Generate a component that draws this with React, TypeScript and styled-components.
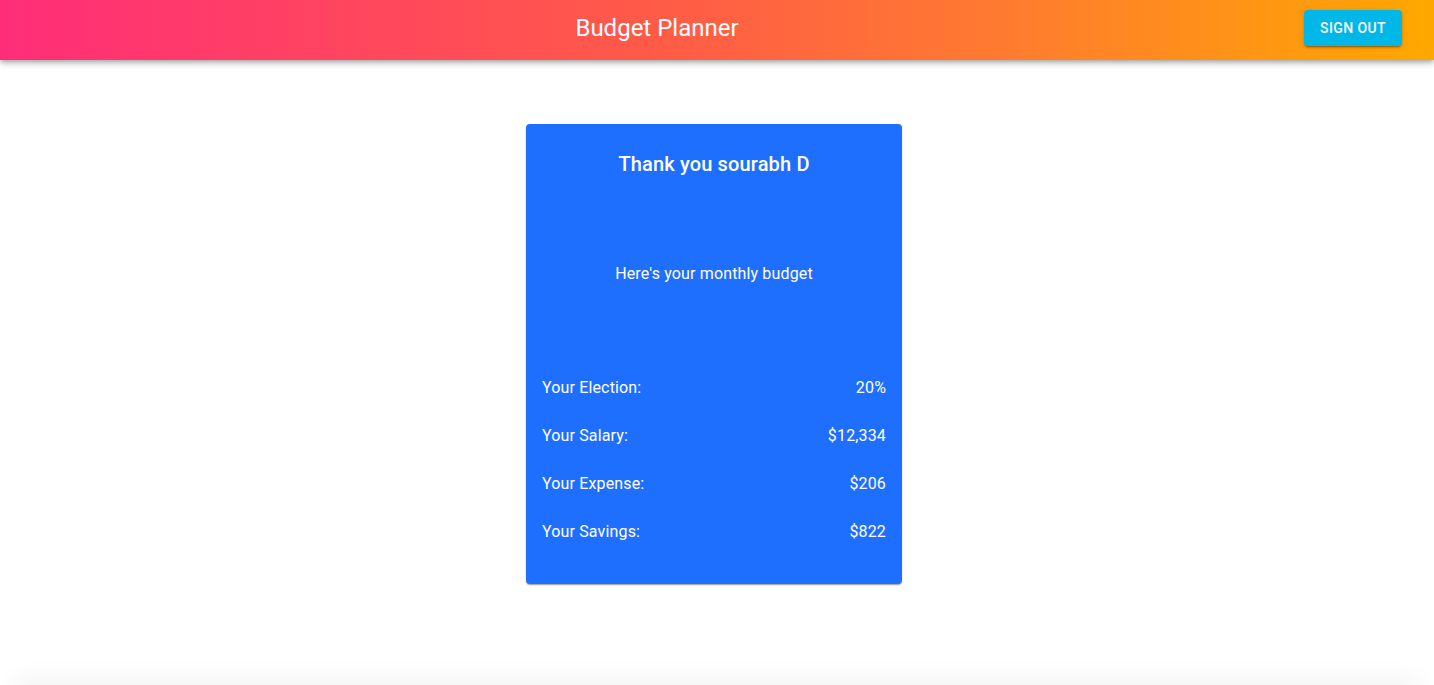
import React from "react";
import styled, { createGlobalStyle } from "styled-components";

const Global = createGlobalStyle`
  html, body { margin: 0; padding: 0; background: #fff; }
  body { font-family: Roboto, "Helvetica", Arial, sans-serif; -webkit-font-smoothing: antialiased; }
  * { box-sizing: border-box; }
`;

const Header = styled.header`
  height: 60px;
  display: flex;
  align-items: center;
  padding: 0 32px 0 24px;
  background: linear-gradient(90deg, #ff2d79 0%, #ff5a48 45%, #ff7b30 70%, #ffa800 100%);
  box-shadow: 0 2px 4px -1px rgba(0,0,0,0.2), 0 4px 5px 0 rgba(0,0,0,0.14), 0 1px 10px 0 rgba(0,0,0,0.12);
  position: relative;
  z-index: 1;
`;

const Title = styled.h1`
  flex: 1;
  margin: -5px 0 0;
  text-align: center;
  color: #fff;
  font-size: 24px;
  font-weight: 400;
  letter-spacing: 0;
  padding-right: 14px;
`;

const SignOut = styled.button`
  height: 36px;
  width: 98px;
  border: none;
  border-radius: 4px;
  background: #00b7e8;
  color: #fff;
  font-family: Roboto, sans-serif;
  font-size: 14px;
  font-weight: 500;
  letter-spacing: 0.4px;
  text-transform: uppercase;
  box-shadow: 0 3px 1px -2px rgba(0,0,0,0.2), 0 2px 2px 0 rgba(0,0,0,0.14), 0 1px 5px 0 rgba(0,0,0,0.12);
  cursor: pointer;
  margin-top: -4px;
`;

const Main = styled.main`
  display: flex;
  justify-content: center;
  padding-top: 64px;
  padding-right: 6px;
`;

const Card = styled.section`
  width: 376px;
  height: 460px;
  background: #1f6fff;
  border-radius: 4px;
  box-shadow: 0 2px 1px -1px rgba(0,0,0,0.2), 0 1px 1px 0 rgba(0,0,0,0.14), 0 1px 3px 0 rgba(0,0,0,0.12);
  color: #fff;
  padding: 0 16px;
  display: flex;
  flex-direction: column;
  letter-spacing: 0.15px;
`;

const CardTitle = styled.h2`
  margin: 0;
  padding-top: 26px;
  height: 80px;
  text-align: center;
  font-size: 20px;
  font-weight: 500;
  line-height: 28px;
`;

const Subtitle = styled.p`
  margin: 0;
  height: 160px;
  display: flex;
  align-items: center;
  justify-content: center;
  font-size: 16px;
  line-height: 24px;
  padding-bottom: 20px;
`;

const Rows = styled.div`
  display: flex;
  flex-direction: column;
`;

const Row = styled.div`
  height: 48px;
  display: flex;
  justify-content: space-between;
  align-items: center;
  font-size: 16px;
  line-height: 24px;
`;

const Footer = styled.footer`
  margin: 101px 20px 0;
  height: 40px;
  box-shadow: 0 0 24px 6px rgba(0,0,0,0.05);
`;

const rows = [
  ["Your Election:", "20%"],
  ["Your Salary:", "$12,334"],
  ["Your Expense:", "$206"],
  ["Your Savings:", "$822"],
];

export default function App() {
  return (
    <>
      <Global />
      <Header>
        <Title>Budget Planner</Title>
        <SignOut>Sign Out</SignOut>
      </Header>
      <Main>
        <Card>
          <CardTitle>Thank you sourabh D</CardTitle>
          <Subtitle>Here's your monthly budget</Subtitle>
          <Rows>
            {rows.map(([k, v]) => (
              <Row key={k}>
                <span>{k}</span>
                <span>{v}</span>
              </Row>
            ))}
          </Rows>
        </Card>
      </Main>
      <Footer />
    </>
  );
}
